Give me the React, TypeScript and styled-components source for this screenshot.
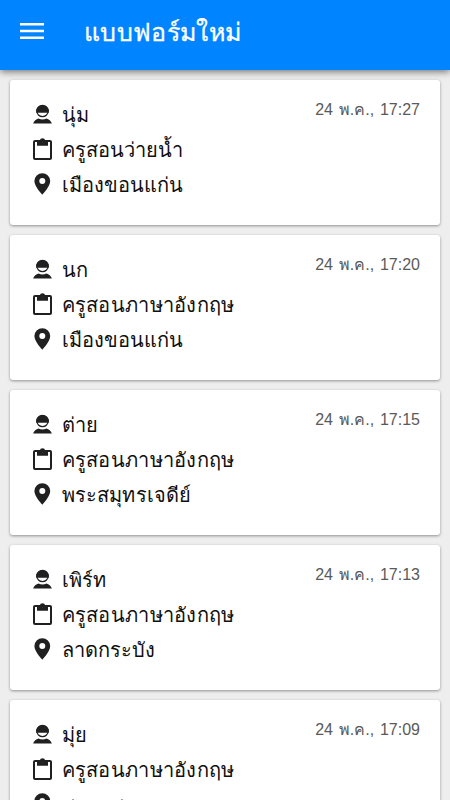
import React from 'react';
import styled, { createGlobalStyle } from 'styled-components';

const PageStyle = createGlobalStyle`
  * { box-sizing: border-box; }
  body {
    margin: 0;
    background: #eee;
    font-family: 'Liberation Sans', sans-serif;
    color: #101010;
  }
`;

const Screen = styled.div`
  height: 800px;
  overflow: hidden;
  display: flex;
  flex-direction: column;
  background: #eee;
`;

const AppBar = styled.header`
  flex: none;
  height: 70px;
  display: flex;
  align-items: center;
  padding: 0 20px 8px;
  background: #0084ff;
  color: #fff;
  box-shadow: 0 2px 7px rgba(0, 0, 0, 0.5);
`;

const MenuButton = styled.button`
  display: flex;
  padding: 0;
  border: 0;
  background: none;
  color: inherit;
`;

const Title = styled.h1`
  margin: 0 0 0 40px;
  padding-top: 1px;
  font-size: 25px;
  font-weight: 400;
  line-height: 38px;
  letter-spacing: 0.35px;
  -webkit-text-stroke: 0.3px currentColor;
`;

const List = styled.main`
  flex: 1;
  min-height: 0;
  overflow: hidden;
  display: flex;
  flex-direction: column;
  gap: 10px;
  padding: 10px 10px 0;
`;

const Card = styled.article`
  flex: none;
  height: 145px;
  display: flex;
  justify-content: space-between;
  padding: 17px 20px 0 22px;
  background: #fff;
  border-radius: 3px;
  box-shadow: 0 1px 3px rgba(0, 0, 0, 0.4);
`;

const Details = styled.div`
  display: flex;
  flex-direction: column;
`;

const Row = styled.div`
  height: 35px;
  display: flex;
  gap: 8.6px;
`;

const RowText = styled.span<{ $tracking?: number }>`
  padding-top: 1px;
  font-size: 20px;
  line-height: 35px;
  letter-spacing: ${p => p.$tracking ?? 0}px;
  white-space: nowrap;
`;

const RowIcon = styled.svg`
  width: 21px;
  height: 24px;
  margin-top: 5px;
  flex: none;
  color: #202020;
`;

const Time = styled.time`
  margin-top: 1px;
  font-size: 16px;
  line-height: 24px;
  word-spacing: 1.4px;
  color: #5a5a5a;
  white-space: nowrap;
`;

const MenuIcon = () => (
  <svg width="24" height="16" viewBox="0 0 24 16" fill="currentColor">
    <path d="M0 0h24v2.6H0zM0 6.7h24v2.6H0zM0 13.4h24V16H0z" />
  </svg>
);

const PersonIcon = () => (
  <RowIcon viewBox="0 0 21 24">
    <circle cx="10.5" cy="9" r="5.700" fill="none" stroke="currentColor" strokeWidth="1.200" />
    <path d="M4.200 10.800a6.400 6.400 0 1 1 12.600 0z" fill="currentColor" />
    <path d="M1.100 21.600c1-2.900 2.900-4.500 5.500-5.200 2.400 1.400 5.400 1.400 7.800 0 2.600.7 4.500 2.300 5.500 5.200z" fill="currentColor" />
  </RowIcon>
);

const ClipboardIcon = () => (
  <RowIcon viewBox="0 0 21 24">
    <rect x="2" y="4" width="17" height="18" rx="1" fill="none" stroke="currentColor" strokeWidth="2" />
    <path
      fill="currentColor"
      fillRule="evenodd"
      d="M5 3.500h2.700a2.900 2.900 0 0 1 5.600 0H16v5.200H5zM10.500 3a1.100 1.100 0 1 0 0 2.200a1.100 1.100 0 0 0 0-2.200z"
    />
  </RowIcon>
);

const PinIcon = () => (
  <RowIcon viewBox="0 0 21 24">
    <path
      fill="currentColor"
      fillRule="evenodd"
      d="M10.300 1.200a7.900 7.900 0 0 0-7.900 7.900c0 5.600 7.900 13.700 7.900 13.700s7.900-8.100 7.900-13.700a7.900 7.900 0 0 0-7.900-7.900zm0 4.900a3 3 0 1 1 0 6a3 3 0 0 1 0-6z"
    />
  </RowIcon>
);

const english = { text: 'ครูสอนภาษาอังกฤษ', tracking: 0.28 };

const forms = [
  { name: 'นุ่ม', subject: { text: 'ครูสอนว่ายน้ำ', tracking: 0.05 }, place: { text: 'เมืองขอนแก่น', tracking: 0 }, time: '24 พ.ค., 17:27' },
  { name: 'นก', subject: english, place: { text: 'เมืองขอนแก่น', tracking: 0 }, time: '24 พ.ค., 17:20' },
  { name: 'ต่าย', subject: english, place: { text: 'พระสมุทรเจดีย์', tracking: 0.18 }, time: '24 พ.ค., 17:15' },
  { name: 'เพิร์ท', subject: english, place: { text: 'ลาดกระบัง', tracking: 0 }, time: '24 พ.ค., 17:13' },
  { name: 'มุ่ย', subject: english, place: { text: 'สมุทรสาคร', tracking: 0 }, time: '24 พ.ค., 17:09' },
];

export default function App() {
  return (
    <Screen>
      <PageStyle />
      <AppBar>
        <MenuButton aria-label="เมนู"><MenuIcon /></MenuButton>
        <Title>แบบฟอร์มใหม่</Title>
      </AppBar>
      <List>
        {forms.map(form => (
          <Card key={form.time}>
            <Details>
              <Row><PersonIcon /><RowText $tracking={0.1}>{form.name}</RowText></Row>
              <Row><ClipboardIcon /><RowText $tracking={form.subject.tracking}>{form.subject.text}</RowText></Row>
              <Row><PinIcon /><RowText $tracking={form.place.tracking}>{form.place.text}</RowText></Row>
            </Details>
            <Time>{form.time}</Time>
          </Card>
        ))}
      </List>
    </Screen>
  );
}
